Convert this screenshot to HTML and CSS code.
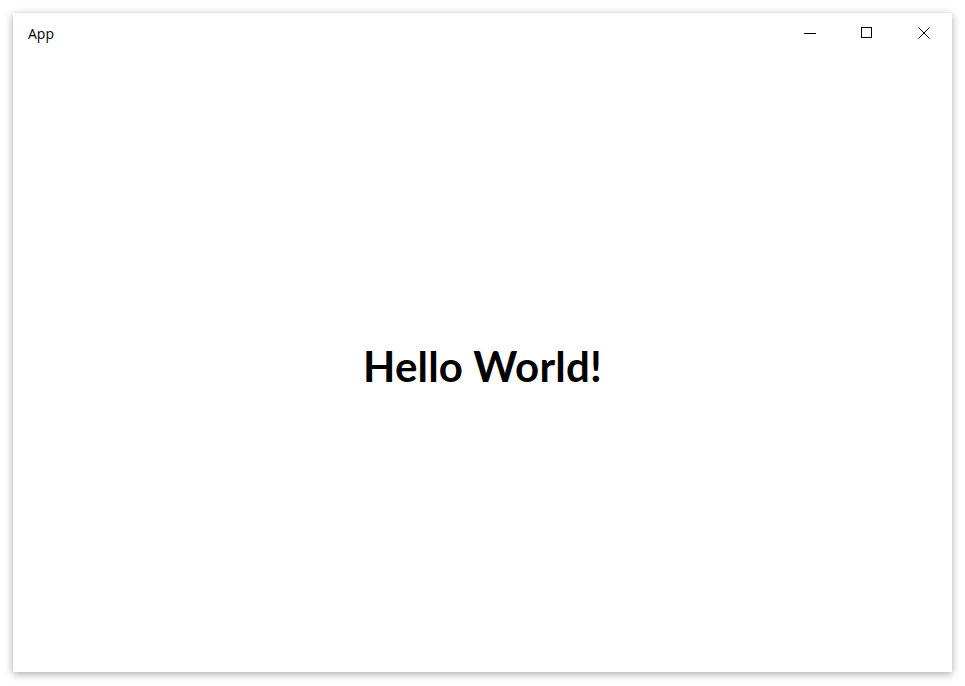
FILE: index.html
```html
<!DOCTYPE html>
<html>
<head>
<meta charset="utf-8">
<link rel="stylesheet" href="styles.css">
</head>
<body>
<div class="window">
  <div class="titlebar">
    <span class="title">App</span>
    <div class="controls">
      <div class="btn"><svg width="12" height="12" viewBox="0 0 12 12"><path d="M0 6.5H12" stroke="#000" stroke-width="1" fill="none"/></svg></div>
      <div class="btn"><svg width="12" height="12" viewBox="0 0 12 12"><rect x="0.5" y="0.5" width="10" height="10" stroke="#000" stroke-width="1" fill="none"/></svg></div>
      <div class="btn"><svg width="12" height="12" viewBox="0 0 12 12"><path d="M0.5 0.5L11.5 11.5M11.5 0.5L0.5 11.5" stroke="#000" stroke-width="1" fill="none"/></svg></div>
    </div>
  </div>
  <div class="content">
    <h1 class="hello">Hello World!</h1>
  </div>
</div>
</body>
</html>
```
FILE: styles.css
```css
html, body { margin: 0; padding: 0; background: #fff; }
body { width: 965px; height: 686px; overflow: hidden; }
.window {
  margin: 13px 0 0 13px;
  width: 939px;
  height: 659px;
  background: #fff;
  box-shadow: 0 2px 8px rgba(0,0,0,0.35);
  display: flex;
  flex-direction: column;
}
.titlebar {
  height: 40px;
  display: flex;
  align-items: flex-start;
  justify-content: space-between;
}
.title {
  font-family: "Open Sans", "Noto Sans", sans-serif;
  font-size: 14px;
  color: #000;
  margin: 11px 0 0 15px;
}
.controls { display: flex; }
.btn {
  width: 57px;
  height: 40px;
  display: flex;
  align-items: center;
  justify-content: center;
}
.btn svg { display: block; margin-top: -1px; }
.content {
  flex: 1;
  display: flex;
  align-items: center;
  justify-content: center;
  padding-top: 6px;
}
.hello {
  margin: 0;
  font-family: "Lato", "Open Sans", sans-serif;
  font-weight: 700;
  font-size: 42px;
  letter-spacing: 0.2px;
  color: #000;
}
```
